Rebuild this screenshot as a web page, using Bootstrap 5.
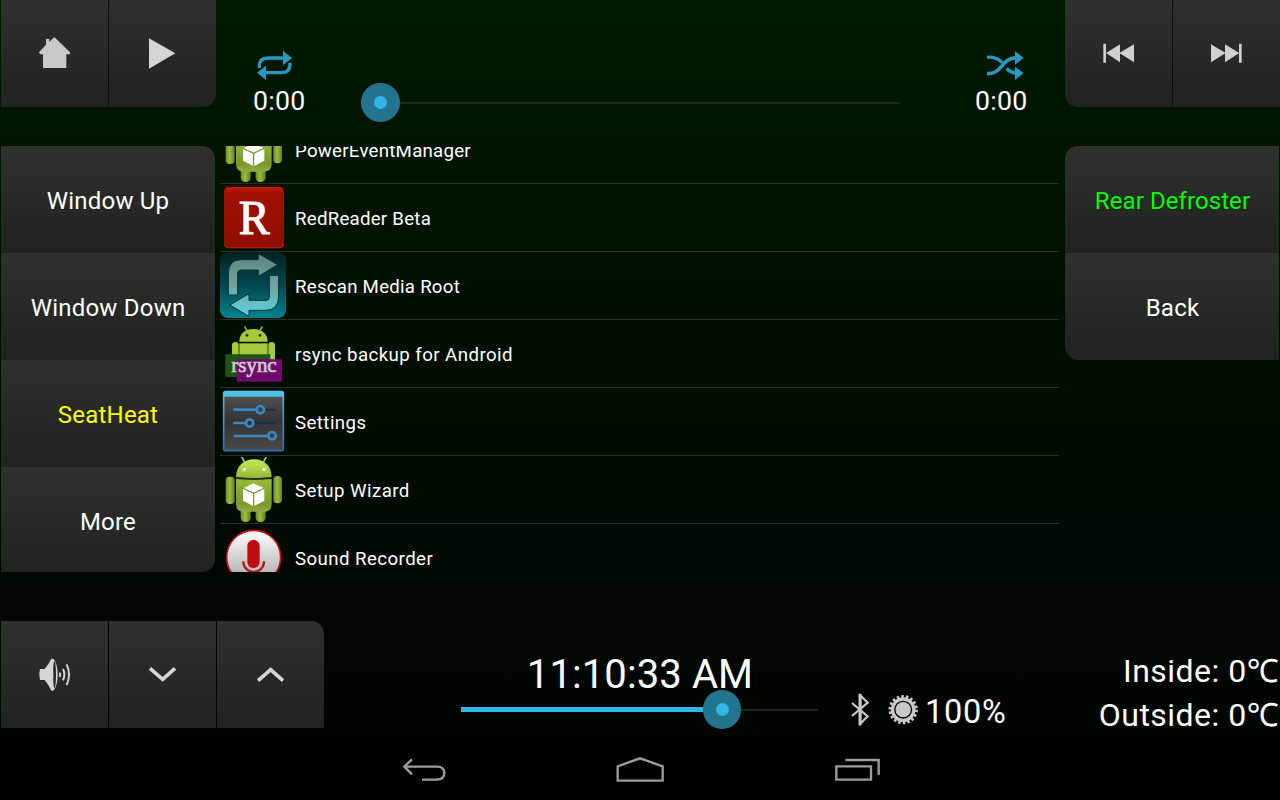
<!DOCTYPE html>
<html lang="en">
<head>
<meta charset="utf-8">
<meta name="viewport" content="width=device-width, initial-scale=1">
<title>Car Dashboard</title>
<link href="https://cdn.jsdelivr.net/npm/bootstrap@5.3.0/dist/css/bootstrap.min.css" rel="stylesheet">
<style>
  body { width: 1280px; height: 800px; overflow: hidden; background: #000; color: #fff; font-family: Roboto, "Noto Sans", sans-serif; }
  svg { display: block; flex: none; }
  .screen { height: 736px; background: linear-gradient(#001900, #000400); }
  .top-bar { height: 146px; }
  .middle { height: 427px; }
  .bottom-bar { height: 163px; padding-top: 48px; }
  .tile { --bs-btn-border-width: 0; --bs-btn-border-radius: 0; --bs-btn-padding-x: 0; --bs-btn-padding-y: 0; --bs-btn-color: #fff;
    width: 107px; height: 107px; background: linear-gradient(#2f312f, #20221f); font-size: 24px; letter-spacing: .22px; white-space: nowrap; }
  .tile-group { gap: 1px; height: 107px; }
  .tile-group .tile { padding: 0 1px 1px 0; }
  .pad-left { margin-left: 1px; }
  .side { width: 214px; }
  .side .tile { width: 214px; flex: none; padding-top: 2px; }
  .side-left { height: 426px; margin-left: 1px; border-radius: 0 13px 13px 0; overflow: hidden; }
  .side-right { height: 214px; margin-right: 1px; border-radius: 13px 0 0 13px; overflow: hidden; }
  .side-right .tile { padding-left: 1px; }
  .media { padding: 50px 36px 0 37px; }
  .elapsed { width: 54px; font-size: 26.67px; line-height: 42px; letter-spacing: .3px; }
  .seek { width: 520px; height: 39px; margin: 33px 0 0 73px; }
  .seek-line { height: 2px; background: #1b2a1a; }
  .thumb { width: 38.5px; height: 38.5px; background: #22758d; top: 0; }
  .thumb::after { content: ""; position: absolute; inset: 12.75px; border-radius: 50%; background: #33b5e5; }
  .apps { width: 839px; height: 426px; margin-left: 5px; overflow: hidden; }
  .apps .list-group { margin-top: -30px; --bs-list-group-bg: transparent; --bs-list-group-color: #fff; --bs-list-group-border-radius: 0; }
  .apps .list-group-item { height: 68px; padding: 1px 0 0; gap: 9px; border: 0; border-bottom: 1px solid #263226; font-size: 18.67px; letter-spacing: .25px; line-height: 68px; }
  .apps .list-group-item.wide { letter-spacing: .43px; }
  .clock-block { width: 357px; margin-left: 137px; padding-top: 29px; }
  .clock { font-size: 40px; line-height: 50px; letter-spacing: .1px; padding-left: 1px; }
  .volume { height: 39px; margin-top: -10px; }
  .volume-fill { height: 5px; background: #33b5e5; }
  .status { font-size: 32.5px; margin-left: 33px; padding-top: 66px; height: 115px; line-height: 50px; letter-spacing: .7px; }
  .temps { font-size: 32px; line-height: 44px; padding: 28px 1px 0 0; letter-spacing: .48px; }
  .nav-keys { height: 64px; padding-left: 402px; padding-top: 19px; }
</style>
</head>
<body>
<svg width="0" height="0" class="position-absolute">
  <defs>
    <linearGradient id="headG" x2="0" y2="1"><stop offset="0" stop-color="#c0ee55"/><stop offset="1" stop-color="#92b934"/></linearGradient>
    <linearGradient id="bodyG" x2="0" y2="1"><stop offset="0" stop-color="#98bb38"/><stop offset=".75" stop-color="#789726"/><stop offset="1" stop-color="#93ad4a"/></linearGradient>
    <linearGradient id="limbG"><stop offset="0" stop-color="#6f8c22"/><stop offset=".45" stop-color="#9abd3e"/><stop offset="1" stop-color="#647f1c"/></linearGradient>
    <linearGradient id="redG" x2="0" y2="1"><stop offset="0" stop-color="#d01a00"/><stop offset=".1" stop-color="#a01000"/><stop offset="1" stop-color="#8e0d00"/></linearGradient>
    <linearGradient id="tealG" x2="0" y2="1"><stop offset="0" stop-color="#04211f"/><stop offset=".5" stop-color="#03484f"/><stop offset="1" stop-color="#028290"/></linearGradient>
    <linearGradient id="arrowG" gradientUnits="userSpaceOnUse" x1="0" y1="11" x2="0" y2="200"><stop offset="0" stop-color="#5c8580"/><stop offset=".5" stop-color="#71a19e"/><stop offset="1" stop-color="#5bd5e2"/></linearGradient>
    <linearGradient id="slateG" x2="0" y2="1"><stop offset="0" stop-color="#555"/><stop offset=".5" stop-color="#343434"/><stop offset="1" stop-color="#484848"/></linearGradient>
    <linearGradient id="frameG" x2="0" y2="1"><stop offset="0" stop-color="#58c8f0"/><stop offset=".15" stop-color="#65a0c4"/><stop offset="1" stop-color="#2f70b4"/></linearGradient>
    <linearGradient id="micG" x2="0" y2="1"><stop offset="0" stop-color="#fff"/><stop offset=".75" stop-color="#bbb"/><stop offset="1" stop-color="#999"/></linearGradient>
    <symbol id="droid" viewBox="15 216 198 198">
      <path d="M79 214l10 17M155 214l-10 17" stroke="#a0c83d" stroke-width="5"/>
      <rect x="77" y="350" width="30" height="61" rx="14" fill="url(#limbG)"/>
      <rect x="122" y="350" width="30" height="61" rx="14" fill="url(#limbG)"/>
      <rect x="32" y="275" width="27" height="82" rx="12" fill="url(#limbG)"/>
      <rect x="175" y="273" width="26" height="82" rx="12" fill="url(#limbG)"/>
      <path d="M63 277c0-34 24-54 54-54s53 20 53 54q-53 5-107 0z" fill="url(#headG)"/>
      <path d="M63 282q53 5 107 0v76q0 22-24 22H87q-24 0-24-22z" fill="url(#bodyG)"/>
      <path d="M63 279q53 5 107 0" fill="none" stroke="#26300c" stroke-width="3"/>
      <circle cx="88" cy="253" r="5" fill="#fff"/><circle cx="147" cy="253" r="5" fill="#fff"/>
      <path d="M116 295l32 15v37l-32 17-32-17v-37z" fill="#fff"/>
      <path d="M84 310l32 15 32-15M116 325v39" fill="none" stroke="#71902a" stroke-width="3.5"/>
    </symbol>
  </defs>
</svg>

<div class="screen d-flex flex-column">
  <header class="top-bar d-flex">
    <div class="tile-group pad-left d-flex">
      <button class="btn tile d-flex align-items-center justify-content-center" aria-label="Home">
        <svg width="32" height="34" viewBox="114 108 96 102"><path d="M117 157l21-23v-17h10v8l15-14 47 46v6h-11v41h-70v-41h-9z" fill="#c8c8c8"/></svg>
      </button>
      <button class="btn tile d-flex align-items-center justify-content-center" aria-label="Play" style="border-radius:0 0 13px 0">
        <svg width="28" height="32" viewBox="444 111 84 96"><path d="M447 115v91l79-46z" fill="#d5d5d5"/></svg>
      </button>
    </div>
    <div class="media d-flex align-items-start flex-grow-1">
      <div class="elapsed">
        <svg class="ms-1" width="36" height="30" viewBox="771 150 108 90" fill="#2a97c0"><path d="M849 152l27 22-27 22zM798 197l-27 21 27 22z"/><path d="M778 204v-5q0-25 25-25h50M870 189v4q0 25-25 25h-49" fill="none" stroke="#2a97c0" stroke-width="10"/></svg>
        <div>0:00</div>
      </div>
      <div class="seek position-relative d-flex align-items-center">
        <div class="seek-line w-100"></div>
        <div class="thumb rounded-circle position-absolute start-0" style="margin-left:-19px"></div>
      </div>
      <div class="elapsed ms-auto">
        <svg style="margin-left:12px" width="37" height="30" viewBox="291 150 111 90" fill="none" stroke="#2a97c0" stroke-width="10"><path d="M291 172q26-3 46 16M350 205q10 12 27 14"/><path d="M291 221c47 2 40-45 88-48" stroke-width="11"/><path d="M375 153l26 21-26 20zM375 200l26 19-26 21z" fill="#2a97c0" stroke="none"/></svg>
        <div>0:00</div>
      </div>
    </div>
    <div class="tile-group d-flex">
      <button class="btn tile d-flex align-items-center justify-content-center" aria-label="Previous" style="border-radius:0 0 0 13px">
        <svg width="32" height="20" viewBox="636 130 96 60" fill="#cfcfcf"><path d="M640 132h8v57h-8zM690 134v54l-42-28zM732 134v54l-44-28z"/></svg>
      </button>
      <button class="btn tile d-flex align-items-center justify-content-center" aria-label="Next">
        <svg width="32" height="20" viewBox="960 130 96 60" fill="#cfcfcf"><path d="M1047 132h8v57h-8zM963 134v54l44-28zM1005 134v54l43-28z"/></svg>
      </button>
    </div>
  </header>

  <main class="middle d-flex align-items-start">
    <div class="side side-left d-flex flex-column">
      <button class="btn tile">Window Up</button>
      <button class="btn tile">Window Down</button>
      <button class="btn tile" style="color:#ff0">SeatHeat</button>
      <button class="btn tile">More</button>
    </div>
    <div class="apps">
      <div class="list-group list-group-flush">
        <div class="list-group-item d-flex"><svg width="66" height="66"><use href="#droid"/></svg>PowerEventManager</div>
        <div class="list-group-item d-flex">
          <svg width="66" height="66" viewBox="15 135 198 198"><rect x="27" y="141" width="180" height="184" rx="13" fill="url(#redG)"/><path d="M29 313q0 10 10 10h156q10 0 10-10" fill="none" stroke="#bb1a08" stroke-width="3"/><text x="71" y="283" font-family="Liberation Serif, serif" font-size="148" fill="#fff" stroke="#fff" stroke-width="3" textLength="93" lengthAdjust="spacingAndGlyphs">R</text></svg>
          RedReader Beta</div>
        <div class="list-group-item d-flex">
          <svg width="66" height="66" viewBox="15 9 198 198" class="overflow-visible"><rect x="15" y="6" width="198" height="198" rx="24" fill="url(#tealG)"/><g fill="url(#arrowG)" stroke="#063235" stroke-width="3"><path d="M40 135V72q0-43 40-43h50V11l58 33-58 35V60H78q-10 0-10 10v65z"/><path d="M191 76v62q0 43-40 43h-49v18l-58-34 58-34v20h51q10 0 10-10V76z"/></g></svg>
          Rescan Media Root</div>
        <div class="list-group-item d-flex wide">
          <svg width="66" height="66" viewBox="15 213 198 198"><g fill="#a4c93a"><path d="M89 229l9 17M142 229l-9 17" stroke="#a4c93a" stroke-width="4"/><path d="M73 275c0-25 18-38 42-38s43 13 43 38z"/><path d="M73 280h85v50H73z"/><rect x="51" y="276" width="20" height="70" rx="10"/><rect x="160" y="276" width="20" height="70" rx="10"/></g><circle cx="96" cy="256" r="4" fill="#182808"/><circle cx="135" cy="256" r="4" fill="#182808"/><path d="M31 313h135v68H31z" fill="#1f5413"/><path d="M65 328h136v67H65z" fill="#700a6c"/><text x="49" y="366" font-family="Liberation Serif, serif" font-size="61" letter-spacing="0" fill="#ccc" stroke="#ccc" stroke-width="2" textLength="136" lengthAdjust="spacingAndGlyphs">rsync</text></svg>
          rsync backup for Android</div>
        <div class="list-group-item d-flex wide">
          <svg width="66" height="66" viewBox="15 12 198 198"><rect x="26" y="20" width="179" height="177" rx="6" fill="url(#slateG)" stroke="url(#frameG)" stroke-width="5"/><path d="M27 21h177v14H27z" fill="#4fbfe8"/><path d="M148 74h33M118 114h63" stroke="#17304a" stroke-width="6"/><g fill="none" stroke="#3987c5" stroke-width="8"><path d="M55 74h69M55 114h37M55 153h102"/><circle cx="136" cy="74" r="11"/><circle cx="104" cy="114" r="11"/><circle cx="171" cy="152" r="11"/></g></svg>
          Settings</div>
        <div class="list-group-item d-flex wide"><svg width="66" height="66"><use href="#droid"/></svg>Setup Wizard</div>
        <div class="list-group-item d-flex wide">
          <svg width="66" height="66" viewBox="15 420 198 198"><circle cx="116" cy="517" r="81" fill="url(#micG)" stroke="#c40f12" stroke-width="5"/><rect x="97" y="465" width="37" height="84" rx="17" fill="#c00d10"/><path d="M85 529c0 42 62 42 62 0" fill="none" stroke="#b91518" stroke-width="7"/></svg>
          Sound Recorder</div>
      </div>
    </div>
    <div class="side side-right ms-auto d-flex flex-column">
      <button class="btn tile" style="color:#0f0;letter-spacing:.08px">Rear Defroster</button>
      <button class="btn tile">Back</button>
    </div>
  </main>

  <footer class="bottom-bar d-flex">
    <div class="tile-group pad-left d-flex">
      <button class="btn tile d-flex align-items-center justify-content-center" aria-label="Volume">
        <svg width="32" height="34" viewBox="114 141 96 102"><path d="M120 177h14q14-18 20-31h6q13 15 13 48t-13 48h-6q-6-15-20-32h-14q-5-17 0-33z" fill="#d5d5d5"/><ellipse cx="163.500" cy="194" rx="4.500" ry="40" fill="#272827"/><path d="M160 180q-8 14 0 28z" fill="#d5d5d5"/><path d="M179 188q3 6 0 13M189 177q8 17 0 34M200 163q14 31 0 62" fill="none" stroke="#d0d0d0" stroke-width="6"/></svg>
      </button>
      <button class="btn tile d-flex align-items-center justify-content-center" aria-label="Down">
        <svg width="28" height="16" viewBox="444 168 84 48" fill="none" stroke="#d5d5d5" stroke-width="11"><path d="M450 175l38 33 37-33"/></svg>
      </button>
      <button class="btn tile d-flex align-items-center justify-content-center" aria-label="Up" style="border-radius:0 13px 0 0">
        <svg width="28" height="16" viewBox="768 168 84 48" fill="none" stroke="#d5d5d5" stroke-width="11"><path d="M774 212l38-33 37 33"/></svg>
      </button>
    </div>
    <div class="clock-block">
      <div class="clock text-center">11:10:33 AM</div>
      <div class="volume position-relative d-flex align-items-center">
        <div class="volume-fill" style="width:73.1%"></div>
        <div class="seek-line flex-grow-1"></div>
        <div class="thumb rounded-circle position-absolute" style="left:calc(73.1% - 19px)"></div>
      </div>
    </div>
    <div class="status d-flex">
      <svg width="19" height="34" style="margin-top:6px" viewBox="274 159 57 102" fill="none" stroke="#c8c8c8" stroke-width="6.500"><path d="M277 189l47 40-22 22v-85l22 22-47 40"/><path d="M301 162v94" stroke-width="9"/></svg>
      <svg width="30" height="31" style="margin-left:18px;margin-top:7px" viewBox="385 162 90 93"><circle cx="430.500" cy="209" r="39" fill="none" stroke="#c8c8c8" stroke-width="10" stroke-dasharray="7.500 6.114"/><circle cx="430.500" cy="209" r="32" fill="none" stroke="#c8c8c8" stroke-width="10"/><circle cx="430.500" cy="209" r="23" fill="#c8c8c8"/></svg>
      <div style="margin-left:7px">100%</div>
    </div>
    <div class="temps ms-auto text-end">
      <div>Inside: 0℃</div>
      <div>Outside: 0℃</div>
    </div>
  </footer>
</div>
<nav class="nav-keys d-flex align-items-start">
  <svg width="44" height="29" viewBox="66 345 132 87" fill="none" stroke="#9c9c9c" stroke-width="7"><path d="M96 358l-23 22 23 23M73 380h98q22 0 22 19t-22 20h-45"/></svg>
  <svg width="50" height="29" style="margin-left:169px" viewBox="705 342 150 87" fill="none" stroke="#9c9c9c" stroke-width="7"><path d="M713 376l67-24 68 24v43H713z"/></svg>
  <svg width="47" height="29" style="margin-left:169px" viewBox="222 345 141 87" fill="none" stroke="#9c9c9c" stroke-width="7"><path d="M229 379h104v40H229zM256 360h100v45"/></svg>
</nav>
<script src="https://cdn.jsdelivr.net/npm/bootstrap@5.3.0/dist/js/bootstrap.bundle.min.js"></script>
</body>
</html>
